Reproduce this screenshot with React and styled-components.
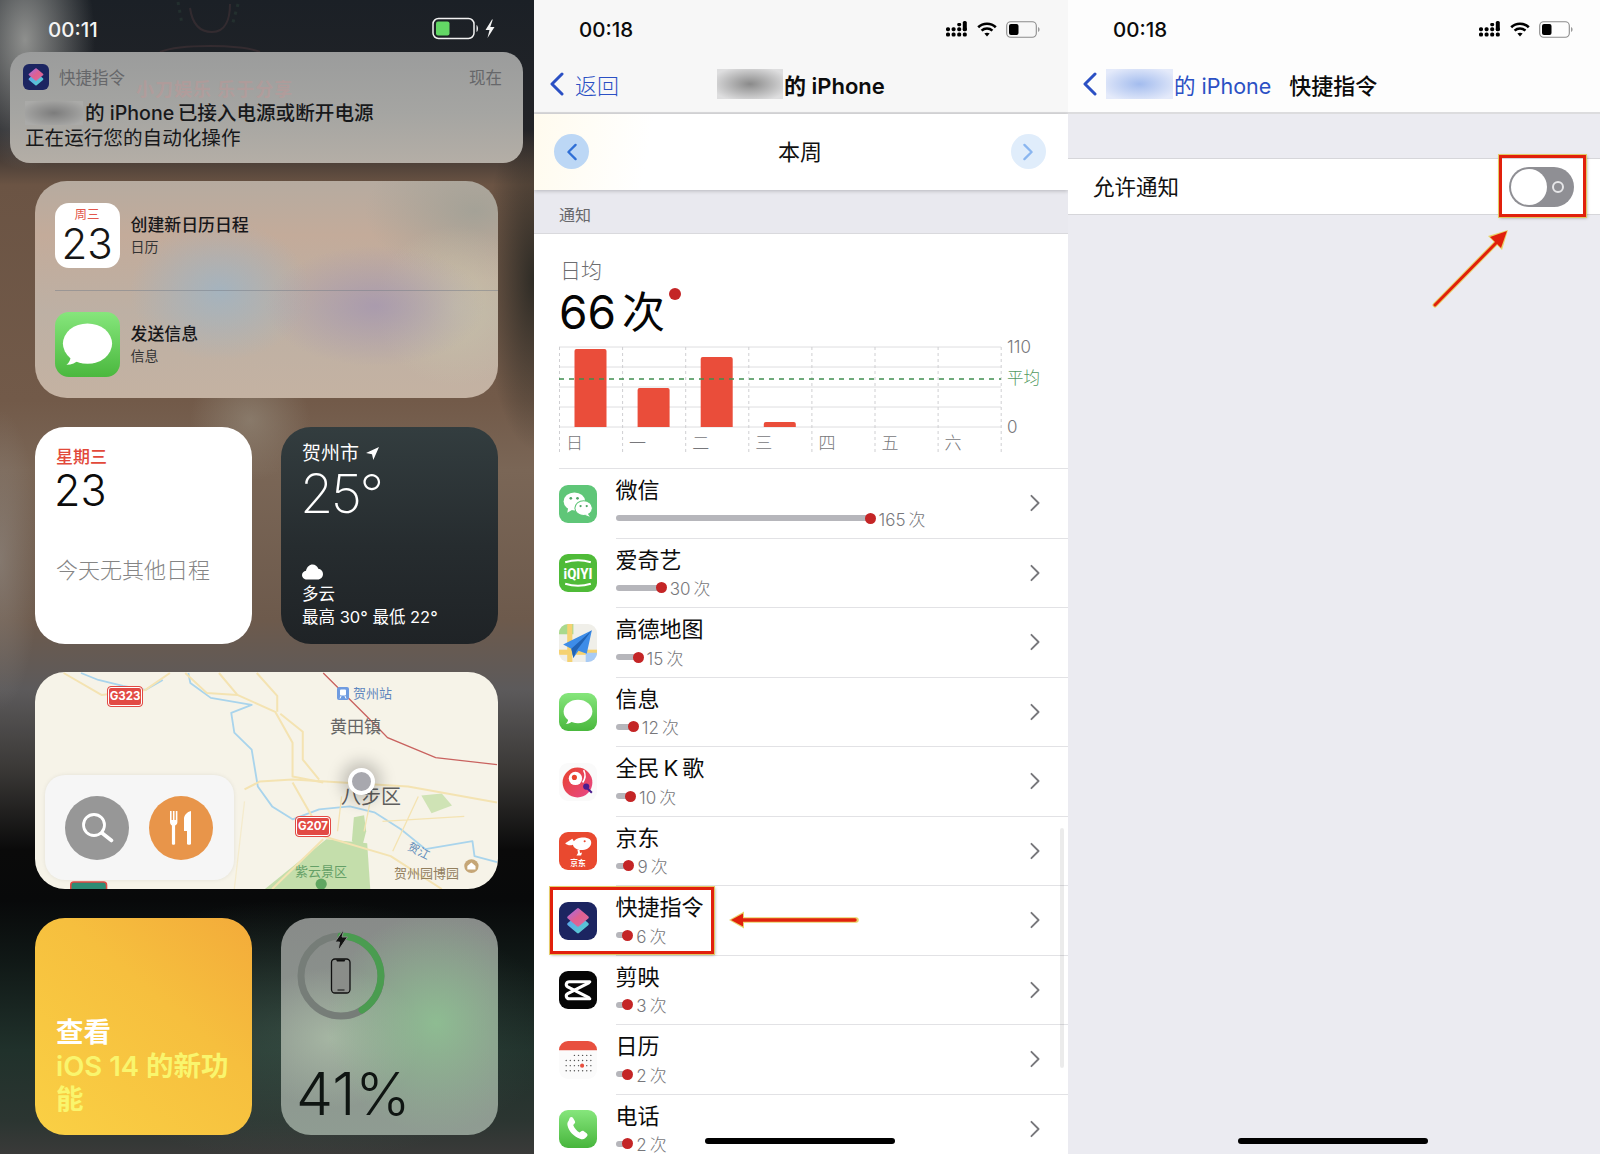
import styled, { createGlobalStyle } from "styled-components";

const GlobalStyle = createGlobalStyle`
  html, body {
    margin: 0;
    padding: 0;
    background: #fff;
  }
  * {
    box-sizing: border-box;
  }
`;

const FONT = `Inter, "Noto Sans CJK SC", sans-serif`;

const Page = styled.div`
  display: flex;
  width: 1600px;
  height: 1154px;
  overflow: hidden;
  font-family: ${FONT};
`;

const Panel = styled.div`
  position: relative;
  display: flex;
  flex-direction: column;
  flex: none;
  width: ${(p) => p.$w}px;
  height: 1154px;
  overflow: hidden;
  background: ${(p) => p.$bg};
`;

/* ---------- left panel ---------- */

const WidgetScreen = styled(Panel)`
  background:
    radial-gradient(ellipse 70px 130px at 25px 40px, rgba(190, 190, 185, 0.7), transparent),
    radial-gradient(ellipse 50px 170px at 534px 280px, rgba(35, 36, 32, 0.85), transparent),
    radial-gradient(ellipse 60px 60px at 250px 420px, rgba(150, 140, 125, 0.6), transparent),
    radial-gradient(ellipse 40px 150px at 0px 560px, rgba(150, 145, 140, 0.5), transparent),
    radial-gradient(ellipse 260px 130px at 300px 1030px, rgba(90, 120, 105, 0.35), transparent),
    linear-gradient(
      180deg,
      #1b2026 0px,
      #232428 130px,
      #6b5444 185px,
      #725a49 400px,
      #7a6656 470px,
      #6d5a4c 620px,
      #5c5a5b 690px,
      #3a3836 770px,
      #0a0a0a 850px,
      #08090a 900px,
      #101816 960px,
      #20312b 1050px,
      #2b3531 1120px,
      #3a3a39 1154px
    );
`;

const Doodle = styled.svg`
  position: absolute;
  left: 150px;
  top: 0;
  opacity: 0.14;
`;

const TopBar = styled.div`
  display: flex;
  flex: none;
  align-items: center;
  justify-content: space-between;
  height: 58px;
  padding: ${(p) => p.$pad};
`;

const Clock = styled.span`
  font-size: 20.5px;
  font-weight: 500;
  color: ${(p) => p.$color || "#0b0b0b"};
`;

const Notice = styled.div`
  position: relative;
  flex: none;
  height: 111px;
  margin: -6px 11px 0 10px;
  padding: 12px 21px 0 13px;
  border-radius: 20px;
  background: linear-gradient(180deg, #9b9c9c 0%, #a5a5a2 55%, #b4aea6 100%);
`;

const NoticeHead = styled.div`
  display: flex;
  align-items: center;
  height: 26px;
  font-size: 16.5px;
  color: #66676a;
`;

const NoticeApp = styled.span`
  margin-left: 10px;
  flex: 1;
`;

const NoticeIcon = styled.div`
  width: 26px;
  height: 26px;
  border-radius: 6px;
  overflow: hidden;
`;

const NoticeText = styled.div`
  margin: 11px 0 0 2px;
  font-size: 19.6px;
  line-height: 24.5px;
  color: #17181a;
`;

const NoticeLine = styled.div`
  display: flex;
  align-items: center;
  font-weight: ${(p) => p.$weight || 400};
  white-space: pre;
`;

const Masked = styled.span`
  display: inline-block;
  flex: none;
  width: ${(p) => p.$w}px;
  height: ${(p) => p.$h}px;
  margin: 0 ${(p) => p.$gap || 0}px 0 ${(p) => p.$lead || 0}px;
  background: radial-gradient(ellipse at 50% 50%, ${(p) => p.$dark} 0%, ${(p) => p.$light} 85%);
`;

const Watermark = styled.span`
  position: absolute;
  left: 126px;
  top: 29px;
  font-size: 18px;
  line-height: 1;
  font-weight: 700;
  letter-spacing: 1px;
  color: rgba(222, 140, 140, 0.26);
  white-space: nowrap;
`;

const WidgetGrid = styled.div`
  display: grid;
  grid-template-columns: 217px 217px;
  grid-auto-rows: 217px;
  gap: 28.5px 29px;
  margin: 18px 0 0 35px;
`;

const Shortcuts = styled.div`
  grid-column: span 2;
  border-radius: 32px;
  overflow: hidden;
  background:
    radial-gradient(ellipse 110px 60px at 340px 125px, rgba(165, 150, 175, 0.8), transparent),
    radial-gradient(ellipse 90px 70px at 185px 110px, rgba(160, 180, 195, 0.85), transparent),
    radial-gradient(ellipse 80px 80px at 420px 125px, rgba(200, 195, 170, 0.8), transparent),
    radial-gradient(ellipse 110px 70px at 440px 30px, rgba(160, 160, 150, 0.85), transparent),
    linear-gradient(180deg, #b6aba0 0%, #c3ab9a 25%, #bdb0a4 60%, #c4b2a2 100%);
`;

const ActionRow = styled.div`
  display: flex;
  align-items: center;
  height: 108.5px;
  padding-left: 19.5px;
`;

const ActionBody = styled.div`
  margin-left: 11px;
  color: #17171a;
`;

const ActionTitle = styled.div`
  font-size: 16.9px;
  font-weight: 500;
  line-height: 22px;
`;

const ActionSub = styled.div`
  font-size: 14px;
  line-height: 21px;
  color: #333;
`;

const ActionRule = styled.div`
  height: 1px;
  margin-left: 19.5px;
  background: rgba(120, 125, 135, 0.5);
`;

const DateIcon = styled.div`
  display: flex;
  flex-direction: column;
  align-items: center;
  width: 65px;
  height: 65px;
  padding-top: 5px;
  border-radius: 14px;
  background: #fff;
`;

const DateDay = styled.span`
  font-size: 12.5px;
  line-height: 14px;
  color: #e2574c;
`;

const DateNum = styled.span`
  margin-top: 4px;
  font-size: 42px;
  line-height: 36px;
  font-weight: 300;
  color: #151515;
`;

const BigIcon = styled.div`
  width: 65px;
  height: 65px;
  border-radius: 14px;
  overflow: hidden;
`;

const Widget = styled.div`
  position: relative;
  display: flex;
  flex-direction: column;
  border-radius: 30px;
  overflow: hidden;
`;

const CalendarWidget = styled(Widget)`
  padding: 19px 21px;
  background: #fff;
`;

const CalWeek = styled.span`
  font-size: 17px;
  line-height: 22px;
  font-weight: 500;
  color: #e2493a;
`;

const CalDate = styled.span`
  margin-left: -2px;
  font-size: 43px;
  line-height: 44px;
  font-weight: 300;
  color: #0c0c0c;
`;

const CalEmpty = styled.span`
  margin-top: 43px;
  font-size: 22px;
  line-height: 30px;
  font-weight: 300;
  color: #858585;
`;

const WeatherWidget = styled(Widget)`
  padding: 16px 21px 15px;
  color: #fff;
  background: linear-gradient(180deg, #333d3f 0%, #262c2f 55%, #1f2326 100%);
`;

const City = styled.div`
  display: flex;
  align-items: center;
  gap: 7px;
  font-size: 19px;
  line-height: 22px;
`;

const Temp = styled.div`
  margin-left: -2px;
  font-size: 54px;
  line-height: 58px;
  font-weight: 200;
  letter-spacing: -2.5px;
`;

const WeatherFoot = styled.div`
  margin-top: auto;
  font-size: 16.5px;
  line-height: 23px;
`;

const CloudWrap = styled.div`
  height: 16px;
  margin-bottom: 3px;
  line-height: 0;
`;

const MapWidget = styled(Widget)`
  grid-column: span 2;
  background: #f6f3e8;
`;

const MapArt = styled.svg`
  display: block;
  width: 463px;
  height: 218px;
`;

const MapLabel = styled.span`
  position: absolute;
  left: ${(p) => p.$x}px;
  top: ${(p) => p.$y}px;
  font-size: ${(p) => p.$size}px;
  line-height: 1;
  color: ${(p) => p.$color};
  white-space: nowrap;
  transform: rotate(${(p) => p.$rot || 0}deg);
`;

const RoadBadge = styled.span`
  position: absolute;
  left: ${(p) => p.$x}px;
  top: ${(p) => p.$y}px;
  width: 36px;
  height: 21px;
  border: 1px solid #e24a44;
  border-radius: 4px;
  outline: 1px solid #fff;
  outline-offset: -2px;
  background: #e24a44;
  color: #fff;
  font-size: 11.5px;
  font-weight: 700;
  line-height: 19px;
  text-align: center;
`;

const MapSearch = styled.div`
  position: absolute;
  left: 10px;
  top: 103px;
  display: flex;
  align-items: center;
  gap: 19.5px;
  width: 189px;
  height: 105px;
  padding-left: 20px;
  border-radius: 20px;
  background: #f6f6f6;
  box-shadow: 0 0 4px rgba(0, 0, 0, 0.08);
`;

const MapButton = styled.div`
  display: flex;
  align-items: center;
  justify-content: center;
  width: 64px;
  height: 64px;
  border-radius: 50%;
  background: ${(p) => p.$bg};
`;

const MapPin = styled.span`
  position: absolute;
  left: 313px;
  top: 96px;
  width: 27px;
  height: 27px;
  border: 4px solid #fff;
  border-radius: 50%;
  background: #a8a8ae;
  box-shadow: 0 0 16px 6px rgba(0, 0, 0, 0.22);
`;

const TipWidget = styled(Widget)`
  justify-content: flex-end;
  padding: 0 10px 18px 21px;
  background: linear-gradient(40deg, #fad044 0%, #f6bf3e 60%, #f3ab3a 100%);
  font-size: 27.5px;
  font-weight: 600;
  line-height: 33.5px;
`;

const TipHead = styled.div`
  color: #fff;
`;

const TipBody = styled.div`
  color: #f9f56d;
`;

const BatteryWidget = styled(Widget)`
  padding: 11px 15px 10px;
  background:
    radial-gradient(ellipse 110px 110px at 155px 105px, rgba(142, 190, 146, 0.95), transparent),
    radial-gradient(ellipse 90px 70px at 50px 120px, rgba(168, 185, 165, 0.9), transparent),
    linear-gradient(180deg, #888b89 0%, #8f9c92 100%);
`;

const BatteryPct = styled.div`
  margin-top: auto;
  font-size: 59px;
  line-height: 62px;
  font-weight: 300;
  color: #0f1512;
`;

/* ---------- shared iOS bars ---------- */

const StatusIcons = styled.div`
  display: flex;
  align-items: center;
  gap: 9px;
`;

const NavBar = styled.div`
  display: flex;
  flex: none;
  align-items: center;
  height: 56px;
  padding: 0 0 2px ${(p) => p.$pad}px;
  border-bottom: 2px solid #dcdcde;
  font-size: 22px;
  color: #0c0c0c;
`;

const BackLink = styled.span`
  display: flex;
  align-items: center;
  width: ${(p) => p.$w}px;
  color: #2b50c4;
  font-size: 22px;
  font-weight: 300;
`;

const BackLabel = styled.span`
  margin-left: 11px;
`;

const NavTitle = styled.span`
  display: flex;
  align-items: center;
  font-weight: 600;
  white-space: pre;
`;

const NavBlue = styled.span`
  color: #2b50c4;
  font-size: 21.5px;
  white-space: pre;
`;

const NavGap = styled.span`
  margin-left: 18px;
  font-weight: 500;
`;

const HomeBar = styled.div`
  position: absolute;
  left: 50%;
  bottom: 10px;
  width: 190px;
  height: 6px;
  margin-left: -96px;
  border-radius: 3px;
  background: #000;
`;

const RedBox = styled.div`
  position: absolute;
  left: ${(p) => p.$x}px;
  top: ${(p) => p.$y}px;
  width: ${(p) => p.$w}px;
  height: ${(p) => p.$h}px;
  border: 3px solid #e1200c;
  outline: 1px solid rgba(226, 200, 90, 0.9);
  box-shadow: 1px 1px 3px rgba(0, 0, 0, 0.35);
`;

const ArrowArt = styled.svg`
  position: absolute;
  left: ${(p) => p.$x}px;
  top: ${(p) => p.$y}px;
  overflow: visible;
`;

/* ---------- middle panel ---------- */

const Header = styled.div`
  flex: none;
  background: #f7f7f7;
`;

const WeekBar = styled.div`
  position: relative;
  z-index: 1;
  display: flex;
  flex: none;
  align-items: center;
  justify-content: space-between;
  height: 76px;
  padding: 0 22px 0 20px;
  background: linear-gradient(100deg, #fffbee 0%, #fff 22%);
  box-shadow: 0 1px 4px rgba(0, 0, 0, 0.22);
  font-size: 22px;
  color: #111;
`;

const WeekTitle = styled.span`
  padding-bottom: 4px;
`;

const RoundButton = styled.div`
  display: flex;
  align-items: center;
  justify-content: center;
  width: 35px;
  height: 35px;
  margin-bottom: 1px;
  border-radius: 50%;
  background: ${(p) => p.$bg};
`;

const SectionHead = styled.div`
  flex: none;
  height: 44px;
  padding-left: 25px;
  border-bottom: 1px solid #d9d9dd;
  background: #e9e9ef;
  font-size: 16px;
  line-height: 50px;
  color: #68686c;
`;

const Sheet = styled.div`
  flex: 1;
  background: #fff;
`;

const Summary = styled.div`
  margin-left: 25px;
  padding-top: 23px;
  height: 235px;
  border-bottom: 1px solid #e2e2e5;
`;

const SummaryLabel = styled.div`
  padding-left: 1px;
  font-size: 21px;
  line-height: 28px;
  font-weight: 300;
  color: #6d6d70;
`;

const SummaryValue = styled.div`
  display: flex;
  height: 56px;
  font-size: 46px;
  line-height: 54px;
  color: #050505;
`;

const ValueUnit = styled.span`
  margin-left: 6px;
  font-size: 43px;
`;

const ValueDot = styled.span`
  width: 12px;
  height: 12px;
  margin: 3px 0 0 4px;
  border-radius: 50%;
  background: #c42526;
`;

const ChartArt = styled.svg`
  display: block;
  margin-top: -5px;
  font-family: ${FONT};
`;

const AppRowBox = styled.div`
  display: flex;
  align-items: center;
  height: 69.5px;
  padding-left: 25px;
`;

const AppIcon = styled.div`
  flex: none;
  width: 38px;
  height: 38px;
  border-radius: 9px;
  overflow: hidden;
`;

const AppBody = styled.div`
  display: flex;
  align-items: center;
  flex: 1;
  height: 69.5px;
  margin-left: 18.5px;
  padding-right: 28px;
  border-bottom: 1px solid #e2e2e5;
`;

const AppInfo = styled.div`
  flex: 1;
`;

const AppName = styled.div`
  font-size: 22px;
  line-height: 28px;
  color: #0c0c0c;
`;

const Meter = styled.div`
  display: flex;
  align-items: center;
  height: 24px;
  margin-top: 2px;
`;

const MeterBar = styled.span`
  flex: none;
  height: 6px;
  width: ${(p) => p.$w}px;
  border-radius: 3px;
  background: #b6b6bb;
`;

const MeterDot = styled.span`
  flex: none;
  width: 11px;
  height: 11px;
  margin-left: -5.5px;
  border-radius: 50%;
  background: #c42526;
`;

const MeterText = styled.span`
  margin-left: 3px;
  font-size: 17px;
  font-weight: 300;
  color: #77777b;
  white-space: pre;
`;

const ScrollThumb = styled.div`
  position: absolute;
  left: 526px;
  top: 828px;
  width: 4px;
  height: 240px;
  border-radius: 2px;
  background: rgba(0, 0, 0, 0.08);
`;

/* ---------- right panel ---------- */

const WhiteHead = styled.div`
  flex: none;
  background: #fdfdfd;
`;

const Settings = styled.div`
  flex: 1;
  padding-top: 44px;
`;

const SettingRow = styled.div`
  display: flex;
  align-items: center;
  justify-content: space-between;
  height: 57px;
  padding: 0 26px 0 25px;
  border-top: 1px solid #d6d6da;
  border-bottom: 1px solid #d6d6da;
  background: #fff;
  font-size: 21.5px;
  color: #111;
`;

const SettingLabel = styled.span`
  padding-bottom: 2px;
`;

const Toggle = styled.div`
  display: flex;
  align-items: center;
  justify-content: space-between;
  width: 65px;
  height: 40px;
  padding: 0 10px 0 2px;
  border-radius: 20px;
  background: #8f8f94;
`;

const ToggleKnob = styled.span`
  width: 36px;
  height: 36px;
  border-radius: 50%;
  background: #fff;
`;

const ToggleMark = styled.span`
  width: 12px;
  height: 12px;
  border: 2px solid #e6e6e8;
  border-radius: 50%;
`;

/* ---------- drawings ---------- */

const Wifi = () => (
  <svg width="20" height="15" viewBox="0 0 20 15" fill="none" stroke="#000" strokeWidth="2.6">
    <path d="M1.2 5.2C6 .6 14 .6 18.8 5.2" />
    <path d="M4.6 8.6c3-2.8 7.8-2.8 10.800 0" />
    <path d="M10 14.400 7.400 11.600c1.500-1.200 3.700-1.200 5.200 0z" fill="#000" stroke="none" />
  </svg>
);

const Signal = () => (
  <svg width="22" height="16" viewBox="0 0 22 16" fill="#000">
    {[0, 5.6, 11.2, 16.8].map((x) => (
      <g key={x}>
        <rect x={x} y="11.500" width="4" height="4" rx="1.600" />
        <rect x={x} y="6.200" width="4" height="4" rx="1.600" />
      </g>
    ))}
    <rect x="11.200" y="2" width="4" height="3.200" rx="1.400" />
    <rect x="16.800" y="0" width="4" height="10" rx="1.600" />
  </svg>
);

const Battery = () => (
  <svg width="34" height="17" viewBox="0 0 34 17" fill="none">
    <rect x="0.700" y="0.700" width="29.600" height="15.600" rx="4" stroke="#8b8b8b" strokeWidth="1.100" />
    <rect x="3" y="3" width="9.500" height="11" rx="2" fill="#000" />
    <path d="M32 6v5c1-.4 1.600-1.400 1.600-2.500S33 6.400 32 6z" fill="#9a9a9a" />
  </svg>
);

const LeftBattery = () => (
  <svg width="64" height="24" viewBox="0 0 64 24" fill="none">
    <rect x="1" y="1.500" width="41" height="20" rx="5.500" stroke="#f2f2f2" strokeWidth="1.500" />
    <rect x="4" y="4.500" width="13.500" height="14" rx="2" fill="#63d765" />
    <path d="M44.500 8v7c1-.5 1.500-2 1.500-3.500S45.500 8.500 44.500 8z" fill="#eee" />
    <path d="M60 2.500 53.500 13h4l-2 8 7-11h-4.200L60.800 2.500z" fill="#f4f4f4" />
  </svg>
);

const Chevron = ({ w = 14, h = 24, color, width = 3, dir = "left" }) => (
  <svg width={w} height={h} viewBox="0 0 14 24" fill="none" stroke={color} strokeWidth={width} strokeLinecap="round" strokeLinejoin="round">
    <path d={dir === "left" ? "M12 2 2 12l10 10" : "M2 2l10 10L2 22"} />
  </svg>
);

const ShortcutsArt = ({ id }) => (
  <svg width="100%" height="100%" viewBox="0 0 37 37">
    <defs>
      <linearGradient id={`${id}a`} x1="0" y1="0" x2="1" y2="1">
        <stop offset="0" stopColor="#a86be0" />
        <stop offset="0.5" stopColor="#e0608f" />
        <stop offset="1" stopColor="#d86aa0" />
      </linearGradient>
      <linearGradient id={`${id}b`} x1="0" y1="0" x2="1" y2="1">
        <stop offset="0" stopColor="#5aa0f0" />
        <stop offset="1" stopColor="#58d0cc" />
      </linearGradient>
    </defs>
    <rect width="37" height="37" fill="#1c2561" />
    <path d="M18.500 14 27.500 21.500 18.500 29 9.500 21.500z" fill={`url(#${id}b)`} stroke={`url(#${id}b)`} strokeWidth="3" strokeLinejoin="round" />
    <path d="M18.500 7.500 27.500 15 18.500 22.500 9.500 15z" fill={`url(#${id}a)`} stroke={`url(#${id}a)`} strokeWidth="3" strokeLinejoin="round" />
  </svg>
);

const MessageArt = ({ id }) => (
  <svg width="100%" height="100%" viewBox="0 0 37 37">
    <defs>
      <linearGradient id={id} x1="0" y1="0" x2="0" y2="1">
        <stop offset="0" stopColor="#86e67c" />
        <stop offset="1" stopColor="#4ab83e" />
      </linearGradient>
    </defs>
    <rect width="37" height="37" fill={`url(#${id})`} />
    <ellipse cx="18.500" cy="18" rx="14" ry="11.500" fill="#fff" />
    <path d="M9 25c0 2-1 4-2.500 5 3 0 5.500-1 7-3z" fill="#fff" />
  </svg>
);

const WechatArt = () => (
  <svg width="100%" height="100%" viewBox="0 0 37 37">
    <rect width="37" height="37" fill="#5fc678" />
    <ellipse cx="15" cy="16" rx="10.500" ry="8.800" fill="#fff" />
    <path d="M9 22l-1 5 5-3z" fill="#fff" />
    <ellipse cx="24" cy="22.500" rx="8.500" ry="7.200" fill="#fff" stroke="#5fc678" strokeWidth="1" />
    <path d="M28 28l2 3-5-2z" fill="#fff" />
    <circle cx="11.500" cy="13" r="1.300" fill="#4fa565" />
    <circle cx="18" cy="13" r="1.300" fill="#4fa565" />
    <circle cx="21" cy="20.500" r="1.100" fill="#4fa565" />
    <circle cx="27" cy="20.500" r="1.100" fill="#4fa565" />
  </svg>
);

const IqiyiArt = () => (
  <svg width="100%" height="100%" viewBox="0 0 37 37">
    <rect width="37" height="37" fill="#4fbb38" />
    <path d="M6 8c8-2.500 17-2.500 25 0M6 29c8 2.500 17 2.500 25 0" fill="none" stroke="#fff" strokeWidth="2" />
    <text x="18.500" y="24" textAnchor="middle" fontSize="15" fontWeight="800" fill="#fff" fontFamily="Roboto, sans-serif" textLength="28" lengthAdjust="spacingAndGlyphs">iQIYI</text>
  </svg>
);

const AmapArt = () => (
  <svg width="100%" height="100%" viewBox="0 0 37 37">
    <rect width="37" height="37" fill="#f0efe9" />
    <rect width="14" height="10" x="0" y="0" fill="#a9d98d" />
    <rect x="8" width="5" height="37" fill="#f5d272" />
    <rect y="25" width="37" height="5" fill="#f5d272" />
    <path d="M26 28h11v9H26z" fill="#a8cbf5" />
    <path d="M32 6 4 20l8 4 2 9 5-7 8 3z" fill="#3d8ce8" />
    <path d="M32 6 12 24l2 9 3-7z" fill="#2163b5" />
  </svg>
);

const KgeArt = () => (
  <svg width="100%" height="100%" viewBox="0 0 37 37">
    <defs>
      <linearGradient id="kge" x1="0" y1="0" x2="1" y2="1">
        <stop offset="0" stopColor="#e8432c" />
        <stop offset="1" stopColor="#e8488a" />
      </linearGradient>
    </defs>
    <rect width="37" height="37" fill="#fafafa" />
    <circle cx="18" cy="19" r="14.500" fill="url(#kge)" />
    <circle cx="16" cy="15" r="6.500" fill="#fff" />
    <circle cx="15" cy="14" r="2.500" fill="#e8432c" />
    <path d="M24 7c2 4 2 8-1 12" fill="none" stroke="#fff" strokeWidth="1.500" />
    <circle cx="26.500" cy="23" r="3" fill="#4b1d8f" />
    <path d="M28 25l4 4" stroke="#4b1d8f" strokeWidth="2" />
  </svg>
);

const JdArt = () => (
  <svg width="100%" height="100%" viewBox="0 0 37 37">
    <rect width="37" height="37" fill="#e9492f" />
    <path d="M6 11 13 6.500 14.500 9C17 5 26 4 30 7c2.500 2.500 1.500 7-2 9-3 1.700-7 2-10 1-2.500-.8-4-2.500-4.500-4.500C11 13.500 8 13 6 11z" fill="#fff" />
    <path d="M18 17.500h2l.5 3 2-.5-1 3h-4.500l1.500-2.500z" fill="#fff" />
    <circle cx="25" cy="9" r="1" fill="#e9492f" />
    <text x="18.500" y="33" textAnchor="middle" fontSize="7.500" fontWeight="700" fill="#fff" fontFamily={FONT}>京东</text>
  </svg>
);

const CapcutArt = () => (
  <svg width="100%" height="100%" viewBox="0 0 37 37">
    <rect width="37" height="37" fill="#060606" />
    <g fill="none" strokeWidth="3" strokeLinecap="round">
      <path d="M30 10.500H10c-3 0-4 3.500-1.500 5L29 26" stroke="#fff" />
      <path d="M30 27H10c-3 0-4-3.500-1.500-5L29 11.500" stroke="#fff" />
    </g>
  </svg>
);

const CalendarArt = () => (
  <svg width="100%" height="100%" viewBox="0 0 37 37">
    <rect width="37" height="37" fill="#fbfbfb" />
    <rect width="37" height="9" fill="#e8503f" />
    {[14, 19, 24, 29].map((y) =>
      [7, 11, 15, 19, 23, 27, 31].map((x) => (
        <circle key={`${x}-${y}`} cx={x} cy={y} r="0.700" fill={y === 14 && x < 15 ? "#fbfbfb" : "#555"} />
      ))
    )}
    <circle cx="22.500" cy="24" r="2" fill="#e8503f" />
  </svg>
);

const PhoneArt = () => (
  <svg width="100%" height="100%" viewBox="0 0 37 37">
    <defs>
      <linearGradient id="phn" x1="0" y1="0" x2="0" y2="1">
        <stop offset="0" stopColor="#86e67c" />
        <stop offset="1" stopColor="#47b53c" />
      </linearGradient>
    </defs>
    <rect width="37" height="37" fill="url(#phn)" />
    <path d="M10.500 7.500c1-1 2.500-.8 3.200.3l1.700 2.800c.5.900.4 1.900-.3 2.600l-1.300 1.300c1 2.800 3.500 5.800 6.300 7.500l1.500-1.200c.8-.6 1.800-.7 2.600-.1l2.700 1.900c1 .7 1.200 2.200.2 3.200l-1.700 1.700c-1.300 1.300-3 1.300-5 .5-6.200-2.600-10.800-7.200-12.100-13-.4-1.800 0-3.300 1-4.300z" fill="#fff" />
  </svg>
);

const ChartSvg = () => {
  const step = 63.1;
  const cols = [0, 1, 2, 3, 4, 5, 6, 7].map((i) => i * step);
  const days = ["日", "一", "二", "三", "四", "五", "六"];
  const bars = [78, 39, 70, 5];
  return (
    <ChartArt width="508" height="116" viewBox="0 -10 508 116">
      {[1, 21, 41, 61, 81].map((y) => (
        <line key={y} x1="0" x2="442" y1={y} y2={y} stroke="#dedee0" strokeWidth="1" />
      ))}
      {cols.map((x) => (
        <line key={x} x1={x + 0.5} x2={x + 0.5} y1="1" y2="106" stroke="#cfcfd2" strokeWidth="1" strokeDasharray="3 3" />
      ))}
      {bars.map((h, i) => (
        <path key={i} d={`M${cols[i] + 15.5} 81v-${h - 2}q0-2 2-2h28q2 0 2 2v${h - 2}z`} fill="#ea4d3a" />
      ))}
      <line x1="0" x2="442" y1="33" y2="33" stroke="#3f8f4f" strokeWidth="1.300" strokeDasharray="5 5" />
      <g fontSize="17" fontWeight="300" fill="#77777b">
        <text x="448" y="7">110</text>
        <text x="448" y="87">0</text>
        <text x="448" y="38" fill="#549a62" fontSize="16.500">平均</text>
        {days.map((d, i) => (
          <text key={d} x={cols[i] + 7} y="103" fontSize="17">{d}</text>
        ))}
      </g>
    </ChartArt>
  );
};

const MapDrawing = () => (
  <MapArt viewBox="0 0 453 218" preserveAspectRatio="none" fill="none">
    <path d="M285 168 325 172 328 218H225z" fill="#c4deab" />
    <path d="M312 146 322 144 324 160 320 176 310 170z" fill="#c4deab" />
    <path d="M378 124 398 122 408 134 388 142z" fill="#cfe3b5" />
    <g stroke="#a9d4ec" strokeWidth="1.800" strokeLinejoin="round">
      <path d="M45 1 62 8 86 14 108 18 125 8" />
      <path d="M150 1 152 11 172 26 212 33 192 41 195 61 212 78 218 115 232 135 252 148 278 138 308 135 332 141 358 158 382 178 428 170 430 185 452 191" />
    </g>
    <g stroke="#f4e3b2" strokeWidth="2" strokeLinejoin="round">
      <path d="M28 1 65 23 108 18 132 1" />
      <path d="M147 1 168 21 198 23 235 40 252 71 252 105 282 111" />
      <path d="M180 1 198 23M217 1 237 24 237 40" />
      <path d="M240 42 262 60 262 88 278 108" />
      <path d="M205 118 220 110 252 108 365 115 452 131" />
      <path d="M252 111 282 165 348 185 398 218" />
      <path d="M282 168 232 218" />
      <path d="M330 120 322 160M375 125 350 180M300 125 296 160M340 150 420 145" strokeWidth="1.300" />
      <path d="M195 218 205 130" strokeWidth="1.200" opacity=".5" />
    </g>
    <path d="M282 1 325 45 345 66 392 86 452 93" stroke="#c9625f" strokeWidth="1.300" />
    <circle cx="427" cy="195" r="7" fill="#c5a677" />
    <path d="M423 195l4-3.500 4 3.500v3.500h-8z" fill="#fff" />
    <circle cx="280" cy="213" r="5.500" fill="#5fa661" />
    <rect x="35" y="211" width="35" height="10" rx="3" fill="#2e8c74" stroke="#e24a44" strokeWidth="1.500" />
  </MapArt>
);

const MapOverlay = () => (
  <>
    <RoadBadge $x={72} $y={14}>G323</RoadBadge>
    <RoadBadge $x={260} $y={144}>G207</RoadBadge>
    <MapLabel $x={302} $y={15} $size={13} $color="#5b86c4">
      <svg width="12" height="13" viewBox="0 0 12 13">
        <rect width="12" height="13" rx="2" fill="#6f9be0" />
        <rect x="3" y="2.500" width="6" height="6" rx="1" fill="#fff" />
        <path d="M4 9l-1 2.500M8 9l1 2.500" stroke="#fff" />
      </svg>
    </MapLabel>
    <MapLabel $x={318} $y={15} $size={13} $color="#5f86bd">贺州站</MapLabel>
    <MapLabel $x={295} $y={47} $size={17} $color="#666">黄田镇</MapLabel>
    <MapLabel $x={306} $y={115} $size={20} $color="#5f5f5f">八步区</MapLabel>
    <MapLabel $x={372} $y={174} $size={11.500} $color="#5f8dbb" $rot={28}>贺江</MapLabel>
    <MapLabel $x={260} $y={193} $size={13} $color="#64a067">紫云景区</MapLabel>
    <MapLabel $x={359} $y={195} $size={13} $color="#93805f">贺州园博园</MapLabel>
    <MapPin />
    <MapSearch>
      <MapButton $bg="#979797">
        <svg width="34" height="34" viewBox="0 0 34 34" fill="none" stroke="#fff" strokeWidth="2.800" strokeLinecap="round">
          <circle cx="14" cy="14" r="10.500" />
          <path d="M22 22l9.500 7.500" strokeWidth="3.600" />
        </svg>
      </MapButton>
      <MapButton $bg="#e8954a">
        <svg width="22" height="34" viewBox="0 0 22 34" fill="#fff">
          <path d="M0 0h1.600v9h1.300V0h1.600v9h1.300V0h1.600v11c0 2-1 3-2.300 3.500V33c0 1-3.200 1-3.200 0V14.500C1 14 0 13 0 11z" />
          <path d="M21 0v33c0 1-4 1-4 0V20h-3V8c0-4 3-7 7-8z" />
        </svg>
      </MapButton>
    </MapSearch>
  </>
);

const CloudIcon = () => (
  <svg width="21" height="16" viewBox="0 0 21 16" fill="#fff">
    <path d="M5 15.500C2.200 15.500 0 13.500 0 11c0-2.300 1.800-4 4-4.300C4.800 3 7.500.5 10.500.5c2.700 0 5 1.700 5.800 4.200 2.700.3 4.700 2.500 4.700 5.300 0 3-2.200 5.500-5.500 5.500z" />
  </svg>
);

const LocationIcon = () => (
  <svg width="13" height="13" viewBox="0 0 13 13" fill="#fff">
    <path d="M13 0 0 6l6 1.200L7.300 13z" />
  </svg>
);

const PowerRing = () => (
  <svg width="90" height="92" viewBox="0 0 90 92" fill="none">
    <circle cx="45" cy="47" r="40" stroke="#767d78" strokeWidth="7" />
    <path d="M45 7A40 40 0 0 1 66 81" stroke="#4a9c50" strokeWidth="7" strokeLinecap="round" />
    <path d="M48 0 39 13h4.500L42 22l9.500-14H46z" fill="#111" stroke="#8b8f8c" strokeWidth="1" />
    <rect x="35.500" y="30" width="18.500" height="34" rx="3.500" fill="#8a8d89" stroke="#0f0f0f" strokeWidth="1.300" />
    <path d="M40 30.500h9.500l-1 2h-7.500z" fill="#0f0f0f" />
    <path d="M41.500 61h7" stroke="#0f0f0f" />
  </svg>
);

const apps = [
  { name: "微信", w: 254.5, count: "165\u2009次", art: <WechatArt /> },
  { name: "爱奇艺", w: 45.7, count: "30\u2009次", art: <IqiyiArt /> },
  { name: "高德地图", w: 22.6, count: "15\u2009次", art: <AmapArt /> },
  { name: "信息", w: 17.8, count: "12\u2009次", art: <MessageArt id="msgRow" /> },
  { name: "全民\u2009K\u2009歌", w: 15, count: "10\u2009次", art: <KgeArt /> },
  { name: "京东", w: 13.4, count: "9\u2009次", art: <JdArt /> },
  { name: "快捷指令", w: 12.3, count: "6\u2009次", art: <ShortcutsArt id="scRow" /> },
  { name: "剪映", w: 12.3, count: "3\u2009次", art: <CapcutArt /> },
  { name: "日历", w: 12.3, count: "2\u2009次", art: <CalendarArt /> },
  { name: "电话", w: 12.3, count: "2\u2009次", art: <PhoneArt /> },
];

const AppRow = ({ app }) => (
  <AppRowBox>
    <AppIcon>{app.art}</AppIcon>
    <AppBody>
      <AppInfo>
        <AppName>{app.name}</AppName>
        <Meter>
          <MeterBar $w={app.w} />
          <MeterDot />
          <MeterText>{app.count}</MeterText>
        </Meter>
      </AppInfo>
      <Chevron w={10} h={18} color="#77777b" width={2.6} dir="right" />
    </AppBody>
  </AppRowBox>
);

const LeftScreen = () => (
  <WidgetScreen $w={534}>
    <Doodle width="120" height="58" viewBox="0 0 120 58" fill="none">
      <path d="M40 8c2 14 8 24 22 24s18-14 18-28M10 52c20-8 80-8 100 0" stroke="#b86a6a" strokeWidth="2" />
      <path d="M28 2l4 22M88 4l-6 22" stroke="#4f8a5f" strokeWidth="3" strokeDasharray="3 5" />
    </Doodle>
    <TopBar $pad="0 38px 0 48px">
      <Clock $color="#f4f4f4">00:11</Clock>
      <LeftBattery />
    </TopBar>
    <Notice>
      <Watermark>小刀娱乐 乐于分享</Watermark>
      <NoticeHead>
        <NoticeIcon>
          <ShortcutsArt id="scNotice" />
        </NoticeIcon>
        <NoticeApp>快捷指令</NoticeApp>
        <span>现在</span>
      </NoticeHead>
      <NoticeText>
        <NoticeLine $weight={500}>
          <Masked $w={58} $h={24} $gap={2} $dark="#7c7c7c" $light="#aaaaa8" />
          的 iPhone{"\u2009"}已接入电源或断开电源
        </NoticeLine>
        <NoticeLine>正在运行您的自动化操作</NoticeLine>
      </NoticeText>
    </Notice>
    <WidgetGrid>
      <Shortcuts>
        <ActionRow>
          <DateIcon>
            <DateDay>周三</DateDay>
            <DateNum>23</DateNum>
          </DateIcon>
          <ActionBody>
            <ActionTitle>创建新日历日程</ActionTitle>
            <ActionSub>日历</ActionSub>
          </ActionBody>
        </ActionRow>
        <ActionRule />
        <ActionRow>
          <BigIcon>
            <MessageArt id="msgBig" />
          </BigIcon>
          <ActionBody>
            <ActionTitle>发送信息</ActionTitle>
            <ActionSub>信息</ActionSub>
          </ActionBody>
        </ActionRow>
      </Shortcuts>
      <CalendarWidget>
        <CalWeek>星期三</CalWeek>
        <CalDate>23</CalDate>
        <CalEmpty>今天无其他日程</CalEmpty>
      </CalendarWidget>
      <WeatherWidget>
        <City>
          贺州市
          <LocationIcon />
        </City>
        <Temp>25°</Temp>
        <WeatherFoot>
          <CloudWrap>
            <CloudIcon />
          </CloudWrap>
          <div>多云</div>
          <div>最高 30° 最低 22°</div>
        </WeatherFoot>
      </WeatherWidget>
      <MapWidget>
        <MapDrawing />
        <MapOverlay />
      </MapWidget>
      <TipWidget>
        <TipHead>查看</TipHead>
        <TipBody>iOS 14 的新功能</TipBody>
      </TipWidget>
      <BatteryWidget>
        <PowerRing />
        <BatteryPct>41%</BatteryPct>
      </BatteryWidget>
    </WidgetGrid>
  </WidgetScreen>
);

const MiddleScreen = () => (
  <Panel $w={534} $bg="#fff">
    <Header>
      <TopBar $pad="0 28px 0 45px">
        <Clock>00:18</Clock>
        <StatusIcons>
          <Signal />
          <Wifi />
          <Battery />
        </StatusIcons>
      </TopBar>
      <NavBar $pad={16}>
        <BackLink $w={167}>
          <Chevron color="#2b50c4" />
          <BackLabel>返回</BackLabel>
        </BackLink>
        <NavTitle>
          <Masked $w={66} $h={30} $gap={1} $dark="#8a8a8a" $light="#dededf" />的 iPhone
        </NavTitle>
      </NavBar>
    </Header>
    <WeekBar>
      <RoundButton $bg="#bcd7f5">
        <Chevron w={10} h={18} color="#2f6fd6" width={3.2} />
      </RoundButton>
      <WeekTitle>本周</WeekTitle>
      <RoundButton $bg="#e0edfb">
        <Chevron w={10} h={18} color="#8ab6f0" width={3.2} dir="right" />
      </RoundButton>
    </WeekBar>
    <SectionHead>通知</SectionHead>
    <Sheet>
      <Summary>
        <SummaryLabel>日均</SummaryLabel>
        <SummaryValue>
          66
          <ValueUnit>次</ValueUnit>
          <ValueDot />
        </SummaryValue>
        <ChartSvg />
      </Summary>
      {apps.map((app) => (
        <AppRow key={app.name} app={app} />
      ))}
    </Sheet>
    <ScrollThumb />
    <RedBox $x={16} $y={887} $w={164} $h={67} />
    <ArrowArt $x={195} $y={908} width="130" height="24" viewBox="0 0 130 24" fill="none">
      <path d="M12 12H127" stroke="#e9d36a" strokeWidth="5.500" strokeLinecap="round" />
      <path d="M0 12 15 3.500V20.500z" fill="#e9d36a" />
      <path d="M12 12H126" stroke="#e1200c" strokeWidth="3.500" strokeLinecap="round" />
      <path d="M2 12 14 5.500V18.500z" fill="#e1200c" />
    </ArrowArt>
    <HomeBar />
  </Panel>
);

const RightScreen = () => (
  <Panel $w={532} $bg="#ebebf1">
    <WhiteHead>
      <TopBar $pad="0 27px 0 45px">
        <Clock>00:18</Clock>
        <StatusIcons>
          <Signal />
          <Wifi />
          <Battery />
        </StatusIcons>
      </TopBar>
      <NavBar $pad={15}>
        <Chevron color="#2b50c4" />
        <Masked $w={67} $h={30} $gap={1} $lead={9} $dark="#a3bcee" $light="#e4eafa" />
        <NavBlue>的 iPhone</NavBlue>
        <NavGap>快捷指令</NavGap>
      </NavBar>
    </WhiteHead>
    <Settings>
      <SettingRow>
        <SettingLabel>允许通知</SettingLabel>
        <Toggle>
          <ToggleKnob />
          <ToggleMark />
        </Toggle>
      </SettingRow>
    </Settings>
    <RedBox $x={431} $y={155} $w={87} $h={62} />
    <ArrowArt $x={364} $y={228} width="80" height="80" viewBox="0 0 80 80" fill="none">
      <path d="M3 77 68 11" stroke="#e9d36a" strokeWidth="5" strokeLinecap="round" />
      <path d="M76 2 70 22 56 8z" fill="#e9d36a" />
      <path d="M3 77 68 11" stroke="#e1200c" strokeWidth="3" strokeLinecap="round" />
      <path d="M75 3 69 20 58 9z" fill="#e1200c" />
    </ArrowArt>
    <HomeBar />
  </Panel>
);

export default function App() {
  return (
    <>
      <GlobalStyle />
      <Page>
        <LeftScreen />
        <MiddleScreen />
        <RightScreen />
      </Page>
    </>
  );
}
